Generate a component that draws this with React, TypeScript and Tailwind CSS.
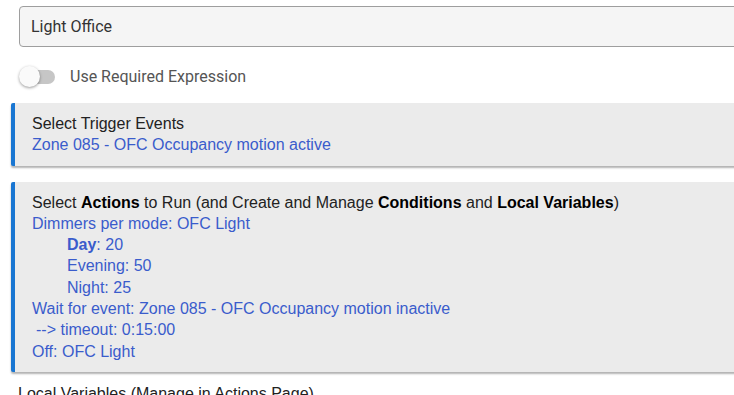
const actionLines = [
  { text: "Dimmers per mode: OFC Light", indent: false },
];

export default function App() {
  return (
    <div className="h-[395px] w-[734px] overflow-hidden bg-white">
      <div className="ml-[19px] mt-[6px] flex h-[41px] w-[740px] items-center rounded-[4px] border border-[#9e9e9e] bg-[#f5f5f5] pl-[11px] font-['Roboto'] text-[16px] text-[#333]">
        Light Office
      </div>

      <div className="ml-[19px] mt-[19px] flex h-[21px] items-center font-['Roboto'] text-[16px] text-[#555]">
        <div className="relative h-[21px] w-[37px]">
          <div className="absolute left-[2px] top-[4px] h-[14px] w-[34px] rounded-full bg-[#c6c6c6]" />
          <div className="absolute left-0 top-0 h-[21px] w-[21px] rounded-full bg-[#fafafa] shadow-[0_1px_3px_rgba(0,0,0,0.4)]" />
        </div>
        <span className="ml-[14px]">Use Required Expression</span>
      </div>

      <div className="ml-[11px] mt-[16px] w-[740px] rounded-l-[2px] border-l-4 border-[#1976d2] bg-[#ebebeb] py-[10px] pl-[17px] font-['Liberation_Sans',Arial,sans-serif] text-[16px] leading-[21.3px] text-[#222] shadow-[0_2px_2px_rgba(0,0,0,0.3)]">
        <div>Select Trigger Events</div>
        <div className="text-[#3a5ccc]">Zone 085 - OFC Occupancy motion active</div>
      </div>

      <div className="ml-[11px] mt-[16px] w-[740px] rounded-l-[2px] border-l-4 border-[#1976d2] bg-[#ebebeb] py-[10px] pl-[17px] font-['Liberation_Sans',Arial,sans-serif] text-[16px] leading-[21.3px] text-[#222] shadow-[0_2px_2px_rgba(0,0,0,0.3)]">
        <div>
          Select <b className="text-black">Actions</b> to Run (and Create and Manage{" "}
          <b className="text-black">Conditions</b> and <b className="text-black">Local Variables</b>)
        </div>
        <div className="text-[#3a5ccc]">
          {actionLines.map((l) => (
            <div key={l.text}>{l.text}</div>
          ))}
          <div className="pl-[35px]">
            <b>Day</b>: 20
          </div>
          <div className="pl-[35px]">Evening: 50</div>
          <div className="pl-[35px]">Night: 25</div>
          <div>Wait for event: Zone 085 - OFC Occupancy motion inactive</div>
          <div className="pl-[4px]">--&gt; timeout: 0:15:00</div>
          <div>Off: OFC Light</div>
        </div>
      </div>

      <div className="ml-[18px] mt-[11px] font-['Liberation_Sans',Arial,sans-serif] text-[16px] leading-[21px] text-[#222]">
        Local Variables (Manage in Actions Page)
      </div>
    </div>
  );
}
